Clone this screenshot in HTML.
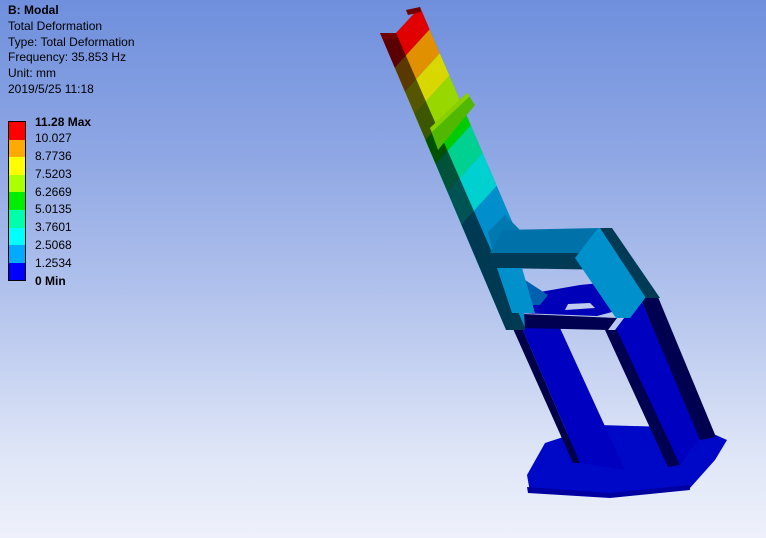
<!DOCTYPE html>
<html><head><meta charset="utf-8"><style>
html,body{margin:0;padding:0}
body{width:766px;height:538px;overflow:hidden;position:relative;background:linear-gradient(180deg,#6f8fdd 0%,#90a8e4 30%,#b9c8ee 60%,#dfe6f7 85%,#eef1fb 100%);font-family:"Liberation Sans","Noto Sans CJK SC",sans-serif;font-size:12px;color:#000}
.t{position:absolute;left:8px;line-height:16px;white-space:nowrap}
.lg{position:absolute;left:8px;top:121px;width:16px;border:1px solid #000}
.lg div{height:17.6px}
.lb{position:absolute;left:35px;white-space:nowrap;line-height:14px}
svg{position:absolute;left:0;top:0}
</style></head><body>
<svg width="766" height="538" viewBox="0 0 766 538">
<defs>
<clipPath id="col"><polygon points="380,33 396,33 420,7 432,35 520,240 525,330 506,330"/></clipPath>
</defs>
<polygon points="527,475 545,443 600,425 700,428 727,440 715,460 690,488 610,497 530,492" fill="#0008c8"/>
<polygon points="527,487 610,493 690,485 690,490 610,498 528,493" fill="#0000a0"/>
<polygon points="615,330 640,297 700,437 680,465" fill="#0000c0"/>
<polygon points="640,297 658,297 716,437 700,440" fill="#000050"/>
<polygon points="605,330 617,330 680,465 668,467" fill="#000050"/>
<polygon points="517,296 580,285 600,283 612,312 597,316 520,313" fill="#0000b8"/>
<polygon points="568,304 590,303 595,308 565,310" fill="#c0ccee"/>
<polygon points="522,328 560,328 625,470 580,463" fill="#0000c0"/>
<polygon points="506,313 522,328 580,463 573,463" fill="#000048"/>
<polygon points="500,313 617,318 608,330 522,328" fill="#000050"/>
<g clip-path="url(#col)">
<rect x="370" y="0" width="200" height="340" fill="#008fcc"/>
<polygon points="370,0 570,0 570,-125 370,95" fill="#e00000"/>
<polygon points="370,95 570,-125 570,-90 370,130" fill="#e09000"/>
<polygon points="370,130 570,-90 570,-57 370,163" fill="#d8d800"/>
<polygon points="370,163 570,-57 570,-19 370,201" fill="#98d800"/>
<polygon points="370,201 570,-19 570,16 370,236" fill="#00cc00"/>
<polygon points="370,236 570,16 570,57 370,277" fill="#00d090"/>
<polygon points="370,277 570,57 570,105 370,325" fill="#00d0d0"/>
<polygon points="380,33 396,33 526,330 506,330" fill="#000" opacity="0.6"/>
</g>
<polygon points="430,128 467,93 475,105 438,150" fill="#50b800"/>
<polygon points="430,128 467,93 470,96 432,132" fill="#88d000"/>
<polygon points="380,33 396,33 398,38 384,40" fill="#700000"/>
<polygon points="406,10 420,7 421,12 408,15" fill="#700000"/>
<polygon points="488,232 505,215 530,240 520,250 492,248" fill="#0078b0"/>
<polygon points="512,290 525,280 548,295 540,305 515,305" fill="#0060b0"/>
<polygon points="503,230 600,228 617,253 490,253" fill="#0072aa"/>
<polygon points="488,253 618,253 622,270 492,268" fill="#003a55"/>
<polygon points="497,268 522,268 535,313 512,313" fill="#0090cc"/>
<polygon points="575,258 598,228 604,228 646,297 630,318 616,318" fill="#0090cc"/>
<polygon points="600,228 612,228 660,298 646,298" fill="#003a55"/>
</svg>
<div class="t" style="top:2px;font-weight:bold">B: Modal</div>
<div class="t" style="top:18px">Total Deformation</div>
<div class="t" style="top:34px">Type: Total Deformation</div>
<div class="t" style="top:49px">Frequency: 35.853 Hz</div>
<div class="t" style="top:65px">Unit: mm</div>
<div class="t" style="top:81px">2019/5/25 11:18</div>
<div class="lg">
<div style="background:#ff0000"></div><div style="background:#ffaa00"></div><div style="background:#ffff00"></div><div style="background:#aaff00"></div><div style="background:#00ee00"></div><div style="background:#00ffaa"></div><div style="background:#00ffff"></div><div style="background:#00aaff"></div><div style="background:#0000ff"></div>
</div>
<div class="lb" style="top:115px;font-weight:bold">11.28 Max</div>
<div class="lb" style="top:131px">10.027</div>
<div class="lb" style="top:149px">8.7736</div>
<div class="lb" style="top:167px">7.5203</div>
<div class="lb" style="top:185px">6.2669</div>
<div class="lb" style="top:202px">5.0135</div>
<div class="lb" style="top:220px">3.7601</div>
<div class="lb" style="top:238px">2.5068</div>
<div class="lb" style="top:256px">1.2534</div>
<div class="lb" style="top:274px;font-weight:bold">0 Min</div>
</body></html>
